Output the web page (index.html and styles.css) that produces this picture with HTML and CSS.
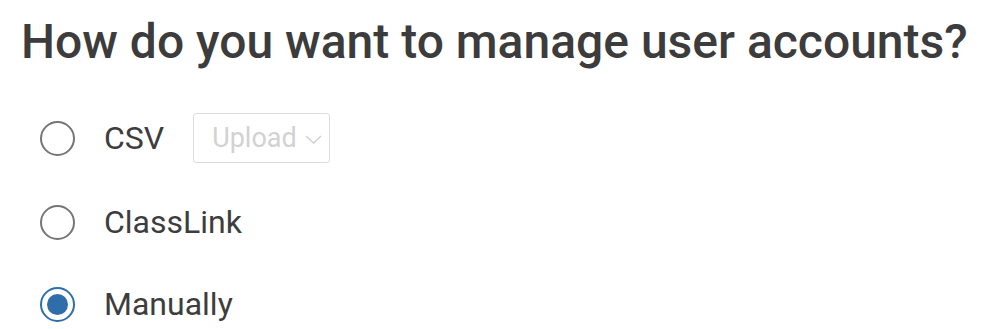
FILE: index.html
```html
<!DOCTYPE html>
<html>
<head>
<meta charset="utf-8">
<link rel="stylesheet" href="styles.css">
</head>
<body>
<div class="page">
  <h1 class="title">How do you want to manage user accounts?</h1>
  <div class="options">
    <label class="option">
      <span class="radio"></span>
      <span class="label">CSV</span>
      <span class="select">Upload<svg class="chev" width="17" height="9" viewBox="0 0 17 9"><path d="M1 1 L8.5 8 L16 1" fill="none" stroke="#cfcfcf" stroke-width="1.3"/></svg></span>
    </label>
    <label class="option">
      <span class="radio"></span>
      <span class="label">ClassLink</span>
    </label>
    <label class="option last">
      <span class="radio checked"></span>
      <span class="label">Manually</span>
    </label>
  </div>
</div>
</body>
</html>
```
FILE: styles.css
```css
html, body { margin: 0; padding: 0; background: #fff; overflow: hidden; }
body { font-family: Roboto, "Liberation Sans", sans-serif; color: #3d3d3d; }
.page { padding: 14px 0 0 21px; }
.title {
  margin: 0;
  font-size: 48px;
  font-weight: 500;
  line-height: 56px;
  color: #3c3c3c;
}
.options { display: flex; flex-direction: column; margin-top: 26px; padding-left: 19px; }
.option { display: flex; align-items: center; height: 84px; }
.option.last { height: 80px; }
.radio {
  width: 31px; height: 31px;
  border: 2px solid #767676;
  border-radius: 50%;
  box-sizing: content-box;
  flex: none;
  display: flex; align-items: center; justify-content: center;
}
.radio.checked { border-color: #2e6fab; }
.radio.checked::after {
  content: ""; width: 21px; height: 21px; border-radius: 50%; background: #2e6fab;
}
.label { margin-left: 29px; font-size: 32px; color: #3d3d3d; }
.select {
  margin-left: 29px;
  display: flex; align-items: center; gap: 8px;
  height: 48px; padding: 0 7px 0 18px;
  border: 1px solid #dcdcdc; border-radius: 3px;
  font-size: 27px; color: #d2d2d2;
}
.chev { margin-top: 3px; }
```
